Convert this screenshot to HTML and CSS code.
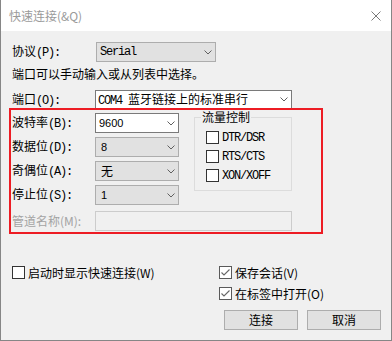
FILE: index.html
```html
<!DOCTYPE html>
<html lang="zh-CN">
<head>
<meta charset="utf-8">
<title>快速连接</title>
<link rel="stylesheet" href="styles.css">
</head>
<body>
<div class="window">
  <div class="titlebar">
    <span class="title">快速连接(&amp;Q)</span>
    <svg class="close" viewBox="0 0 10 10"><path d="M0.5 0.5L9.5 9.5M9.5 0.5L0.5 9.5" stroke="#7a7a7a" stroke-width="1" fill="none"/></svg>
  </div>
  <div class="content">
    <div class="row row-proto">
      <span class="lbl">协议<span class="m">(P):</span></span>
      <div class="combo gray w-proto">
        <span class="val m">Serial</span>
        <svg class="arrow" viewBox="0 0 8 5"><polyline points="0.5,0.5 4,4 7.5,0.5" fill="none" stroke="#606060"/></svg>
      </div>
    </div>
    <div class="hint">端口可以手动输入或从列表中选择。</div>
    <div class="row row-port">
      <span class="lbl">端口<span class="m">(O):</span></span>
      <div class="combo white w-long h19">
        <span class="val val-port"><span class="m">COM4 </span>蓝牙链接上的标准串行</span>
        <svg class="arrow" viewBox="0 0 8 5"><polyline points="0.5,0.5 4,4 7.5,0.5" fill="none" stroke="#606060"/></svg>
      </div>
    </div>
    <div class="serial">
      <div class="fields">
        <div class="row">
          <span class="lbl">波特率<span class="m">(B):</span></span>
          <div class="combo white w-short">
            <span class="val num">9600</span>
            <svg class="arrow" viewBox="0 0 8 5"><polyline points="0.5,0.5 4,4 7.5,0.5" fill="none" stroke="#606060"/></svg>
          </div>
        </div>
        <div class="row">
          <span class="lbl">数据位<span class="m">(D):</span></span>
          <div class="combo gray w-short">
            <span class="val num pad">8</span>
            <svg class="arrow" viewBox="0 0 8 5"><polyline points="0.5,0.5 4,4 7.5,0.5" fill="none" stroke="#606060"/></svg>
          </div>
        </div>
        <div class="row">
          <span class="lbl">奇偶位<span class="m">(A):</span></span>
          <div class="combo gray w-short">
            <span class="val pad">无</span>
            <svg class="arrow" viewBox="0 0 8 5"><polyline points="0.5,0.5 4,4 7.5,0.5" fill="none" stroke="#606060"/></svg>
          </div>
        </div>
        <div class="row">
          <span class="lbl">停止位<span class="m">(S):</span></span>
          <div class="combo gray w-short">
            <span class="val num pad">1</span>
            <svg class="arrow" viewBox="0 0 8 5"><polyline points="0.5,0.5 4,4 7.5,0.5" fill="none" stroke="#606060"/></svg>
          </div>
        </div>
      </div>
      <fieldset class="flow">
        <legend>流量控制</legend>
        <div class="fcheck first"><span class="box"></span><span class="m">DTR/DSR</span></div>
        <div class="fcheck"><span class="box"></span><span class="m">RTS/CTS</span></div>
        <div class="fcheck"><span class="box"></span><span class="m">XON/XOFF</span></div>
      </fieldset>
    </div>
    <div class="row row-pipe">
      <span class="lbl disabled">管道名称(M):</span>
      <div class="input-disabled w-long"></div>
    </div>
    <div class="bottom">
      <div class="check"><span class="box"></span><span>启动时显示快速连接(W)</span></div>
      <div class="right">
        <div class="check"><span class="box checked"><svg viewBox="0 0 11 11"><polyline points="1.5,5.5 4,8 9.5,2.5" fill="none" stroke="#666" stroke-width="1.1"/></svg></span><span>保存会话(V)</span></div>
        <div class="check"><span class="box checked"><svg viewBox="0 0 11 11"><polyline points="1.5,5.5 4,8 9.5,2.5" fill="none" stroke="#666" stroke-width="1.1"/></svg></span><span>在标签中打开(O)</span></div>
        <div class="buttons">
          <div class="btn">连接</div>
          <div class="btn">取消</div>
        </div>
      </div>
    </div>
  </div>
  <div class="annot"></div>
</div>
</body>
</html>
```
FILE: styles.css
```css
* { box-sizing: border-box; }
html, body { margin: 0; padding: 0; }
body {
  font-family: "Noto Sans CJK SC", "Noto Sans", sans-serif;
  font-size: 12px;
  color: #000;
  background: #fff;
}
.window {
  position: relative;
  width: 392px;
  height: 341px;
  background: #f0f0f0;
  border: 1px solid #868686;
  border-top: 0;
  display: flex;
  flex-direction: column;
}
.titlebar {
  flex: none;
  height: 31px;
  background: #fff;
  display: flex;
  align-items: center;
  padding: 0 10px 0 8px;
}
.title { color: #9a9a9a; line-height: 16px; }
.close { margin-left: auto; width: 10px; height: 10px; }

.content { padding: 0 10px 0 11px; }
.m {
  font-family: "Liberation Mono", monospace;
  font-size: 12px;
  letter-spacing: -1.2px;
}
.row { display: flex; align-items: center; }
.lbl { flex: none; width: 83px; line-height: 14px; }
.disabled { color: #a3a3a3; }

.combo {
  display: flex;
  align-items: center;
  height: 20px;
  border: 1px solid #adadad;
  padding-left: 3px;
}
.combo.gray { background: #e1e1e1; border-color: #adadad; }
.combo.white { background: #fff; border-color: #7a7a7a; }
.h19 { height: 19px; }
.val { flex: 1; line-height: 14px; white-space: nowrap; }
.val-port { margin-left: -1px; }
.num { font-family: "Liberation Sans", Arial, sans-serif; font-size: 11px; }
.pad { padding-left: 2px; }
.arrow { flex: none; width: 8px; height: 5px; margin-right: 3px; }
.w-proto { width: 120px; margin-left: 1px; }
.w-long { width: 197px; }
.w-short { width: 84px; }

.row-proto { margin-top: 11px; }
.hint { margin-top: 5px; line-height: 14px; }
.row-port { margin-top: 9px; }

.serial { display: flex; align-items: flex-start; margin-top: 4px; }
.fields { display: flex; flex-direction: column; gap: 4px; }
fieldset.flow {
  margin: -3px 0 0 15px;
  padding: 0 0 5px 0;
  width: 98px;
  min-width: 0;
  border: 1px solid #dcdcdc;
}
fieldset.flow legend {
  margin-left: 6px;
  padding: 0 1px;
  line-height: 14px;
}
.fcheck {
  display: flex;
  align-items: center;
  height: 19px;
  padding-left: 11px;
}
.fcheck.first { margin-top: 4px; }
.box {
  flex: none;
  width: 13px;
  height: 13px;
  border: 1px solid #333;
  background: #fff;
  margin-right: 3px;
  display: flex;
}
.box svg { width: 11px; height: 11px; }
.box.checked { border-color: #5a5a5a; }

.row-pipe { margin-top: 6px; }
.input-disabled {
  height: 20px;
  border: 1px solid #cccccc;
  background: #f0f0f0;
}

.bottom { display: flex; margin-top: 31px; }
.check { display: flex; align-items: center; height: 21px; line-height: 14px; }
.right { margin-left: auto; width: 162px; display: flex; flex-direction: column; }
.buttons { display: flex; justify-content: flex-end; gap: 9px; margin-top: 6px; }
.btn {
  width: 74px;
  height: 20px;
  border: 1px solid #adadad;
  background: #e1e1e1;
  display: flex;
  align-items: center;
  justify-content: center;
  line-height: 14px;
}

.annot {
  position: absolute;
  left: 8px;
  top: 108px;
  width: 314px;
  height: 126px;
  border: 2px solid #ed1c24;
  pointer-events: none;
}
```
